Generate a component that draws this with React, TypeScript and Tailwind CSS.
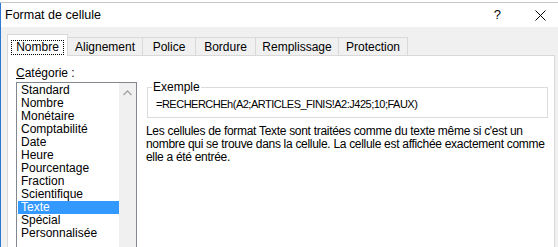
import React from 'react';

const categories = [
  'Standard',
  'Nombre',
  'Monétaire',
  'Comptabilité',
  'Date',
  'Heure',
  'Pourcentage',
  'Fraction',
  'Scientifique',
  'Texte',
  'Spécial',
  'Personnalisée',
];

const tabs = ['Alignement', 'Police', 'Bordure', 'Remplissage', 'Protection'];
const tabWidths = ['w-[75px]', 'w-[53px]', 'w-[60px]', 'w-[83px]', 'w-[69px]'];

const App: React.FC = () => {
  const selected = 'Texte';

  return (
    <div className="w-[558px] h-[247px] overflow-hidden bg-[#f0f0f0] flex flex-col text-black font-['Liberation_Sans',Arial,sans-serif]">
      {/* Sheet peeking behind the dialog */}
      <div className="h-[3px] flex-none bg-white border-b border-[#c6c6c6]" />

      <div className="flex-1 flex border-l border-[#2b78d4] min-h-0">
        <div className="flex-1 flex flex-col min-w-0">
          {/* Title bar */}
          <div className="h-[24px] flex-none bg-white flex items-center justify-between pl-[4px] pr-[12px]">
            <span className="text-[12.5px]">Format de cellule</span>
            <div className="flex items-center gap-[34px]">
              <span className="text-[13px]">?</span>
              <svg width="11" height="11" viewBox="0 0 11 11" className="mt-[1px]">
                <path d="M0.5 0.5 L10.5 10.5 M10.5 0.5 L0.5 10.5" stroke="#000" strokeWidth="1" />
              </svg>
            </div>
          </div>

          {/* Tabs */}
          <div className="flex-none flex items-end pl-[6px] pt-[7px] h-[28px]">
            <div className="relative z-10 h-[22px] w-[61px] -mb-[1px] bg-white border border-b-0 border-[#d9d9d9] flex items-start justify-center pt-[5px]">
              <span className="text-[12px] leading-[13px] px-[4px] border border-dotted border-black">Nombre</span>
            </div>
            {tabs.map((t, i) => (
              <div
                key={t}
                className={`h-[18px] ${tabWidths[i]} border border-b-0 border-l-0 border-[#d9d9d9] flex items-center justify-center text-[12px]`}
              >
                {t}
              </div>
            ))}
          </div>

          {/* Panel */}
          <div className="flex-1 ml-[6px] mr-[3px] bg-white border border-[#d9d9d9] border-b-0 flex min-h-0">
            {/* Category list */}
            <div className="w-[130px] flex-none pl-[8px] pt-[10px] flex flex-col">
              <span className="text-[12px] leading-[14px]">
                <span className="underline">C</span>atégorie :
              </span>
              <div className="mt-[2px] w-[121px] flex-1 border border-[#828790] border-b-0 flex">
                <div className="flex-1 pt-[1px] pl-[1px]">
                  {categories.map((c) => (
                    <div
                      key={c}
                      className={`h-[13px] leading-[13px] text-[12px] pl-[3px] ${
                        c === selected ? 'bg-[#3399ff] text-white' : ''
                      }`}
                    >
                      {c}
                    </div>
                  ))}
                </div>
                <div className="w-[17px] bg-[#f0f0f0] flex justify-center pt-[7px]">
                  <svg width="9" height="6" viewBox="0 0 9 6">
                    <path d="M0.5 5 L4.5 1 L8.5 5" stroke="#a3a3a3" strokeWidth="1.3" fill="none" />
                  </svg>
                </div>
              </div>
            </div>

            {/* Right side */}
            <div className="flex-1 flex flex-col pl-[8px] pt-[31px] min-w-0">
              <div className="relative ml-[1px] mr-[6px] h-[31px] border border-[#dcdcdc]">
                <span className="absolute -top-[8px] left-[4px] bg-white px-[1px] text-[12px] leading-[14px]">Exemple</span>
                <div className="pt-[9px] pl-[8px] text-[11px] leading-[14px] tracking-[-0.5px] whitespace-nowrap">
                  =RECHERCHEh(A2;ARTICLES_FINIS!A2:J425;10;FAUX)
                </div>
              </div>
              <p className="mt-[7px] text-[12px] leading-[13px] tracking-[-0.3px] w-[406px]">
                Les cellules de format Texte sont traitées comme du texte même si c'est un nombre qui se trouve dans la cellule. La cellule est affichée exactement comme elle a été entrée.
              </p>
            </div>
          </div>
        </div>
      </div>
    </div>
  );
};

export default App;
